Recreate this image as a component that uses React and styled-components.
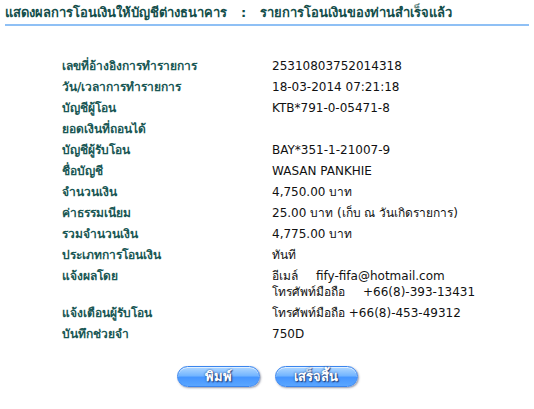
import styled, { createGlobalStyle } from "styled-components";

const Global = createGlobalStyle`
  body {
    margin: 0;
    background: #fff;
    font-family: Tahoma, "DejaVu Sans", "Noto Sans", sans-serif;
    font-size: 12px;
  }
`;

const Page = styled.div`
  width: 534px;
  height: 409px;
  padding: 5px 5px 0 5px;
  box-sizing: border-box;
`;

const Title = styled.div`
  font-weight: bold;
  font-size: 13px;
  line-height: 16px;
  color: #134e4a;
  padding-bottom: 3px;
  border-bottom: 2px solid #8fc0f5;
  width: 524px;
  word-spacing: 1px;
`;

const Sep = styled.span`
  margin: 0 14px;
`;

const Table = styled.div`
  display: grid;
  grid-template-columns: 210px 1fr;
  margin: 32px 0 0 57px;
  row-gap: 5px;
  line-height: 16px;
`;

const Label = styled.div`
  color: #195754;
  font-weight: bold;
  min-height: 16px;
`;

const Value = styled.div`
  color: #111;
  min-height: 16px;
`;

const Gap = styled.span`
  display: inline-block;
  width: ${(p) => p.w}px;
`;

const Buttons = styled.div`
  display: flex;
  justify-content: center;
  gap: 15px;
  margin-top: 24px;
`;

const Pill = styled.button`
  width: 83px;
  height: 21px;
  border-radius: 11px;
  border: 1px solid #3a85ee;
  background: linear-gradient(to bottom, #b2d8ff 0%, #74b6ff 45%, #4696ff 55%, #5aa6ff 100%);
  box-shadow: 1px 1px 2px rgba(60, 70, 100, 0.55), inset 0 1px 0 rgba(255, 255, 255, 0.6);
  color: #fff;
  font-family: Tahoma, "DejaVu Sans", "Noto Sans", sans-serif;
  font-weight: bold;
  font-size: 13px;
  text-shadow: 0 0 2px #1a3f80, 1px 1px 1px #1a3f80;
  padding: 0;
  line-height: 18px;
`;

const rows = [
  ["เลขที่อ้างอิงการทำรายการ", "25310803752014318"],
  ["วัน/เวลาการทำรายการ", "18-03-2014 07:21:18"],
  ["บัญชีผู้โอน", "KTB*791-0-05471-8"],
  ["ยอดเงินที่ถอนได้", ""],
  ["บัญชีผู้รับโอน", "BAY*351-1-21007-9"],
  ["ชื่อบัญชี", "WASAN PANKHIE"],
  ["จำนวนเงิน", "4,750.00 บาท"],
  ["ค่าธรรมเนียม", "25.00 บาท (เก็บ ณ วันเกิดรายการ)"],
  ["รวมจำนวนเงิน", "4,775.00 บาท"],
  ["ประเภทการโอนเงิน", "ทันที"],
];

export default function App() {
  return (
    <Page>
      <Global />
      <Title>
        แสดงผลการโอนเงินให้บัญชีต่างธนาคาร<Sep>:</Sep>รายการโอนเงินของท่านสำเร็จแล้ว
      </Title>
      <Table>
        {rows.map(([l, v]) => (
          <>
            <Label key={l}>{l}</Label>
            <Value key={l + "v"}>{v}</Value>
          </>
        ))}
        <Label>แจ้งผลโดย</Label>
        <Value>
          อีเมล์<Gap w={18} />fify-fifa@hotmail.com
          <br />
          โทรศัพท์มือถือ<Gap w={18} />+66(8)-393-13431
        </Value>
        <Label>แจ้งเตือนผู้รับโอน</Label>
        <Value>โทรศัพท์มือถือ +66(8)-453-49312</Value>
        <Label>บันทึกช่วยจำ</Label>
        <Value>750D</Value>
      </Table>
      <Buttons>
        <Pill>พิมพ์</Pill>
        <Pill>เสร็จสิ้น</Pill>
      </Buttons>
    </Page>
  );
}
